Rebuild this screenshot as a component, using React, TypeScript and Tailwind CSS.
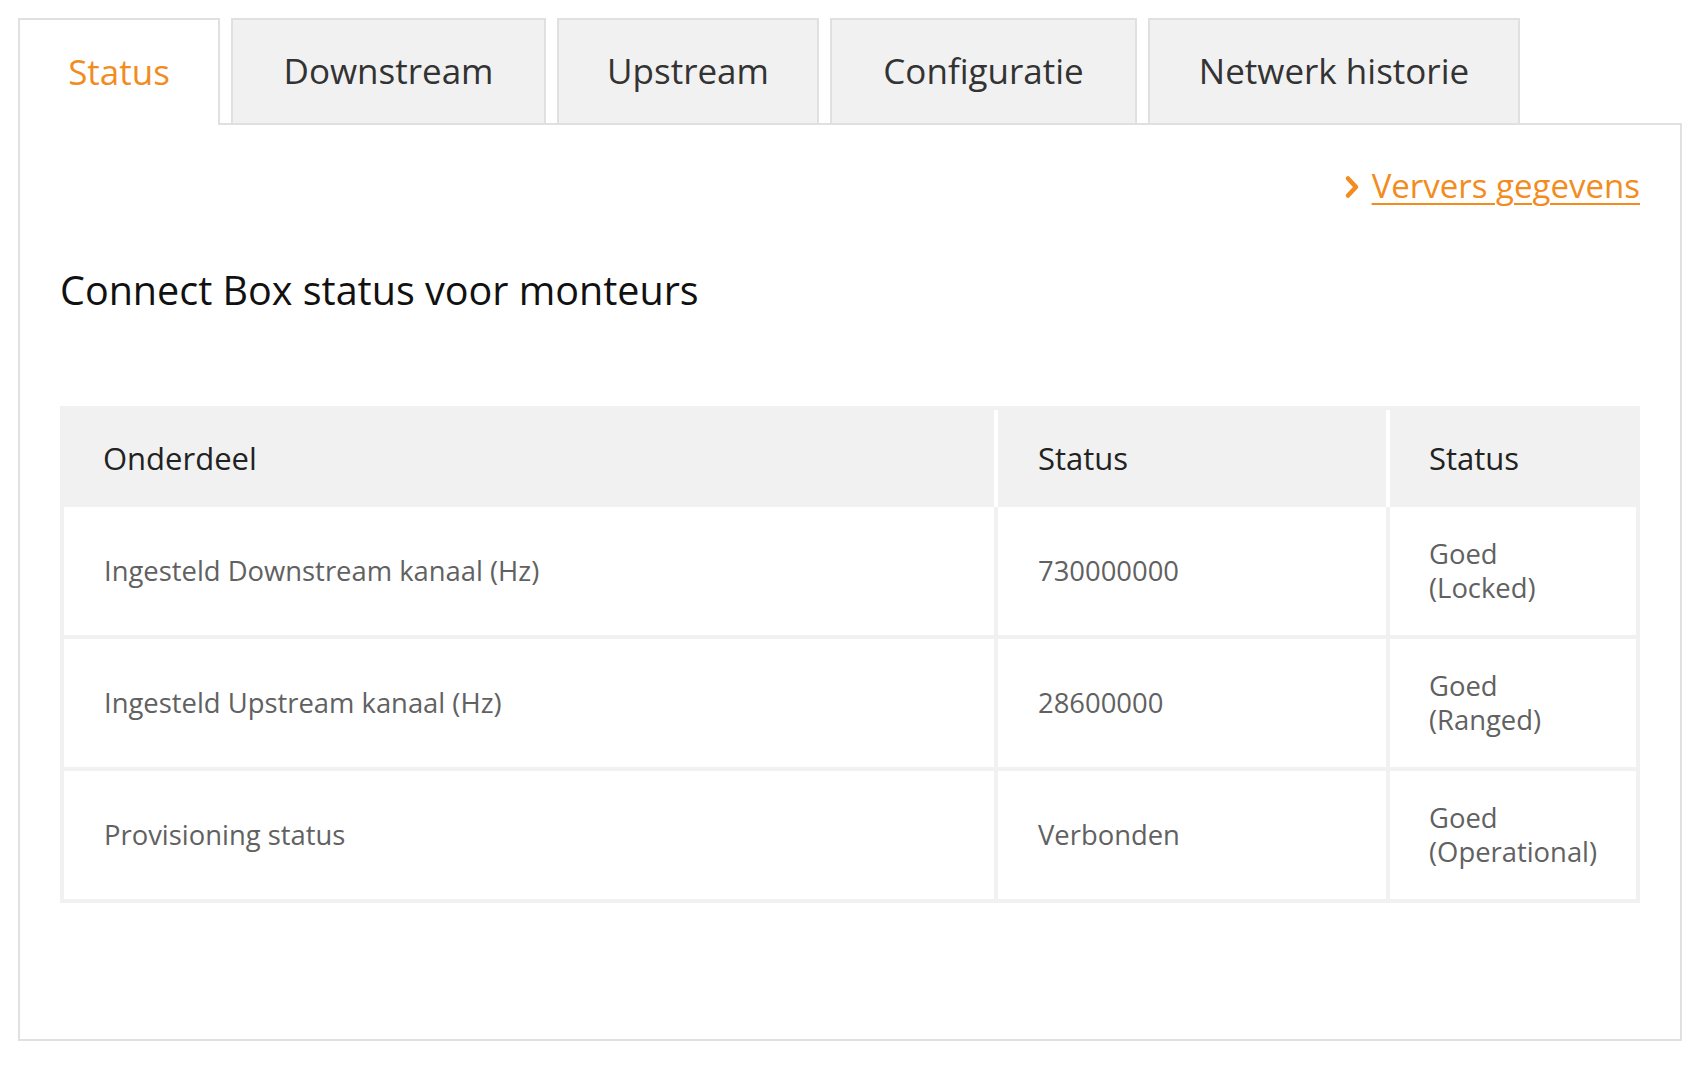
const tabs = [
  { label: 'Status', width: 'w-[202px]', active: true },
  { label: 'Downstream', width: 'w-[315px]', active: false },
  { label: 'Upstream', width: 'w-[262px]', active: false },
  { label: 'Configuratie', width: 'w-[307px]', active: false },
  { label: 'Netwerk historie', width: 'w-[372px]', active: false },
];

const rows = [
  { part: 'Ingesteld Downstream kanaal (Hz)', value: '730000000', status: 'Goed (Locked)' },
  { part: 'Ingesteld Upstream kanaal (Hz)', value: '28600000', status: 'Goed (Ranged)' },
  { part: 'Provisioning status', value: 'Verbonden', status: 'Goed (Operational)' },
];

export default function App() {
  return (
    <div className="min-h-screen bg-white pt-[18px] pl-[18px] font-['Open_Sans',sans-serif]">
      {/* Tabs */}
      <div className="flex items-end gap-[11px] h-[105px]">
        {tabs.map(tab => (
          <div
            key={tab.label}
            className={`${tab.width} flex items-center justify-center border-2 border-b-0 border-[#e0e0e0] text-[35px] ${
              tab.active
                ? 'relative z-10 h-[107px] -mb-[2px] bg-white text-[#f28c1e]'
                : 'h-[105px] bg-[#f1f1f1] text-[#333333]'
            }`}
          >
            {tab.label}
          </div>
        ))}
      </div>

      {/* Panel */}
      <div className="w-[1664px] h-[918px] border-2 border-[#e0e0e0] px-[40px] pt-[38px]">
        <div className="flex justify-end">
          <a href="#" className="flex items-center gap-[12px] text-[33px] leading-[45px] text-[#f28c1e]">
            <svg width="16" height="24" viewBox="0 0 16 24" className="mt-[3px]">
              <polyline points="4,3.5 12,12 4,20.5" fill="none" stroke="#f28c1e" strokeWidth="4.5" strokeLinecap="round" strokeLinejoin="round" />
            </svg>
            <span className="underline decoration-2 underline-offset-[5px]">Ververs gegevens</span>
          </a>
        </div>

        <h1 className="mt-[59px] text-[39.5px] leading-[47px] text-[#111111]">Connect Box status voor monteurs</h1>

        {/* Table */}
        <div className="mt-[92px] w-[1580px] border-4 border-[#f1f1f1]">
          <div className="grid grid-cols-[930px_392px_250px] h-[97px] bg-[#f1f1f1] text-[31px] text-[#222222]">
            <div className="flex items-center pl-[39px]">Onderdeel</div>
            <div className="flex items-center pl-[40px] border-l-4 border-white">Status</div>
            <div className="flex items-center pl-[39px] border-l-4 border-white">Status</div>
          </div>
          {rows.map((row, i) => (
            <div
              key={row.part}
              className={`grid grid-cols-[930px_392px_250px] text-[27.4px] text-[#616161] ${
                i < rows.length - 1 ? 'h-[132px] border-b-4 border-[#f1f1f1]' : 'h-[128px]'
              }`}
            >
              <div className="flex items-center pl-[40px]">{row.part}</div>
              <div className="flex items-center pl-[40px] border-l-4 border-[#f1f1f1]">{row.value}</div>
              <div className="flex items-center pl-[39px] border-l-4 border-[#f1f1f1] leading-[34px]">
                <span className="max-w-[168px]">{row.status}</span>
              </div>
            </div>
          ))}
        </div>
      </div>
    </div>
  );
}
